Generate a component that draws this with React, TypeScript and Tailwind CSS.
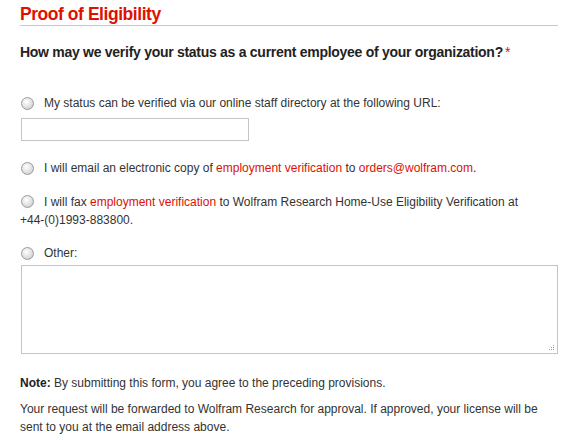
import React from 'react';

function Radio() {
  return (
    <span className="inline-block w-[13px] h-[13px] shrink-0 rounded-full border border-[#9a9a9a] bg-[radial-gradient(circle_at_40%_35%,#ffffff_0%,#e0e0e0_55%,#bdbdbd_100%)]" />
  );
}

function Red({ children }: { children: React.ReactNode }) {
  return <span className="text-[#dd1100]">{children}</span>;
}

export default function App() {
  return (
    <div className="w-[578px] h-[440px] bg-white pl-5 pr-5 text-[12px] leading-[18px] text-[#333] font-['Liberation_Sans',Arial,sans-serif]">
      <h2 className="pt-[5px] pb-[1px] text-[17.5px] leading-[19px] tracking-[-0.45px] font-bold text-[#dd1100] border-b border-[#c8c8c8]">
        Proof of Eligibility
      </h2>

      <p className="mt-[17px] text-[14px] leading-[18px] tracking-[-0.28px] font-bold text-[#222]">
        How may we verify your status as a current employee of your organization?<span className="text-[#dd1100] font-normal ml-[2px]">*</span>
      </p>

      <div className="mt-[33px]">
        <label className="flex items-center gap-[10px] pl-[1px]">
          <Radio />
          <span>My status can be verified via our online staff directory at the following URL:</span>
        </label>
        <div className="mt-[6px] ml-[1px] w-[228px] h-[23px] border border-[#c4c4c4] bg-white" />
      </div>

      <label className="mt-[18px] flex items-center gap-[10px] pl-[1px]">
        <Radio />
        <span>
          I will email an electronic copy of <Red>employment verification</Red> to <Red>orders@wolfram.com</Red>.
        </span>
      </label>

      <div className="mt-[16px]">
        <span className="inline-flex align-middle mr-[10px] ml-[1px] -mt-[2px]"><Radio /></span>
        I will fax <Red>employment verification</Red> to Wolfram Research Home-Use Eligibility Verification at{' '}
        <span className="whitespace-nowrap">+44-(0)1993-883800.</span>
      </div>

      <label className="mt-[15px] flex items-center gap-[10px] pl-[1px]">
        <Radio />
        <span>Other:</span>
      </label>

      <div className="relative mt-[3px] ml-[1px] w-[537px] h-[89px] border border-[#c4c4c4] bg-white">
        <svg className="absolute right-[2px] bottom-[2px]" width="7" height="7" viewBox="0 0 7 7">
          <g fill="#9a9a9a">
            <rect x="5" y="1" width="1" height="1" />
            <rect x="3" y="3" width="1" height="1" />
            <rect x="5" y="3" width="1" height="1" />
            <rect x="1" y="5" width="1" height="1" />
            <rect x="3" y="5" width="1" height="1" />
            <rect x="5" y="5" width="1" height="1" />
          </g>
        </svg>
      </div>

      <p className="mt-[20px]">
        <b className="text-[#222]">Note:</b> By submitting this form, you agree to the preceding provisions.
      </p>
      <p className="mt-[8px]">
        Your request will be forwarded to Wolfram Research for approval. If approved, your license will be sent to you at the email address above.
      </p>
    </div>
  );
}
